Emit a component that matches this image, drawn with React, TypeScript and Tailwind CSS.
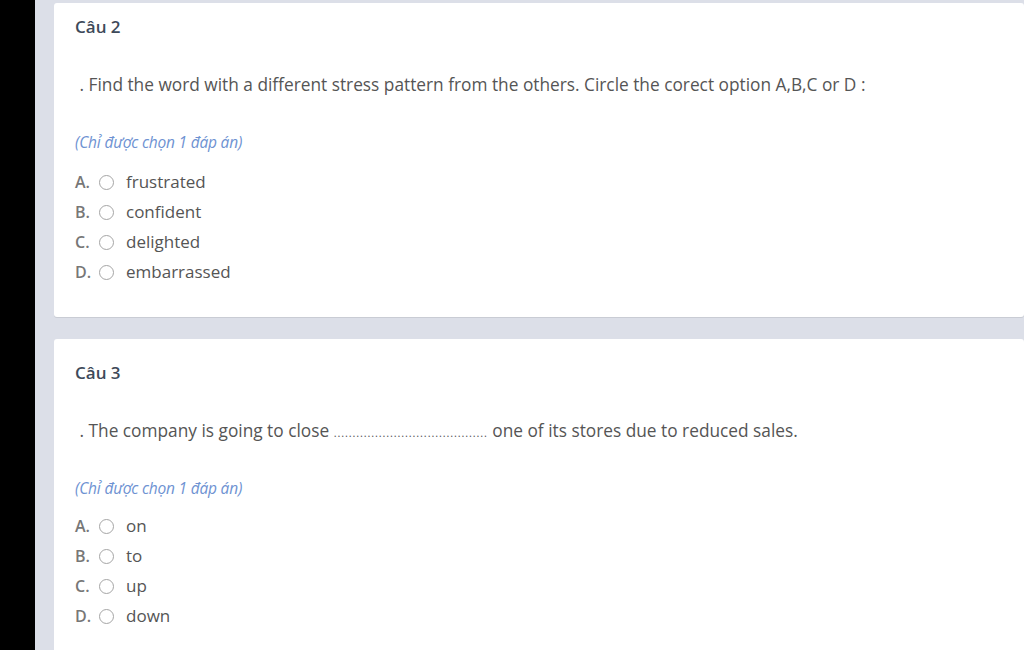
import React from 'react';

type Option = { key: string; text: string };

const font = { fontFamily: '"Open Sans", "Noto Sans", sans-serif' };

function Radio() {
  return <span className="inline-block h-[15px] w-[15px] shrink-0 rounded-full border border-[#a5a5a5] bg-white" />;
}

function Options({ options }: { options: Option[] }) {
  return (
    <ul className="flex flex-col">
      {options.map((o) => (
        <li key={o.key} className="flex h-[30px] items-center text-[17px] text-[#555]">
          <span className="w-[24px] shrink-0 text-[16px] font-semibold text-[#777]">{o.key}.</span>
          <Radio />
          <span className="ml-[12px]">{o.text}</span>
        </li>
      ))}
    </ul>
  );
}

function QuestionCard({
  title,
  children,
  options,
  className,
  hintGap,
  optionsGap,
}: {
  title: string;
  children: React.ReactNode;
  options: Option[];
  className: string;
  hintGap: string;
  optionsGap: string;
}) {
  return (
    <section className={['rounded-[3px] bg-white pl-[21px] shadow-[0_1px_0_#c9ccd4]', className].join(' ')}>
      <h2 className="text-[17px] font-semibold leading-[24px] text-[#3e4a5a]">{title}</h2>
      <p className="mt-[34px] text-[17.3px] leading-[24px] text-[#555]">{children}</p>
      <p className={['text-[15.5px] italic leading-[20px] tracking-[-0.2px] text-[#6e92d2]', hintGap].join(' ')}>
        (Chỉ được chọn 1 đáp án)
      </p>
      <div className={optionsGap}>
        <Options options={options} />
      </div>
    </section>
  );
}

export default function App() {
  return (
    <div className="flex h-[650px] w-[1024px] overflow-hidden bg-black" style={font}>
      <div className="w-[35px] shrink-0 bg-black" />
      <main className="flex flex-1 flex-col gap-[22px] bg-[#dcdfe8] pl-[19px] pt-[3px]">
        <QuestionCard
          title="Câu 2"
          className="pt-[12px] pb-[30px]"
          hintGap="mt-[35px]"
          optionsGap="mt-[15px]"
          options={[
            { key: 'A', text: 'frustrated' },
            { key: 'B', text: 'confident' },
            { key: 'C', text: 'delighted' },
            { key: 'D', text: 'embarrassed' },
          ]}
        >
          &nbsp;. Find the word with a different stress pattern from the others. Circle the corect option A,B,C or D :
        </QuestionCard>
        <QuestionCard
          title="Câu 3"
          className="pt-[22px] pb-[40px]"
          hintGap="mt-[33px]"
          optionsGap="mt-[13px]"
          options={[
            { key: 'A', text: 'on' },
            { key: 'B', text: 'to' },
            { key: 'C', text: 'up' },
            { key: 'D', text: 'down' },
          ]}
        >
          &nbsp;. The company is going to close{' '}
          <span className="text-[11px] tracking-[0.87px]">.........................................</span> one of its
          stores due to reduced sales.
        </QuestionCard>
      </main>
    </div>
  );
}
